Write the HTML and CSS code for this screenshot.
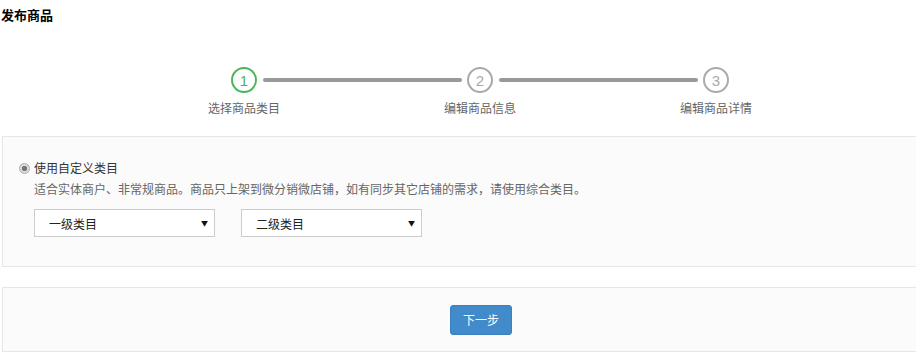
FILE: index.html
```html
<!DOCTYPE html>
<html lang="zh">
<head>
<meta charset="utf-8">
<link rel="stylesheet" href="styles.css">
</head>
<body>
<h1 class="title">发布商品</h1>
<div class="steps">
  <div class="step-track">
    <span class="circle active">1</span>
    <span class="line"></span>
    <span class="circle">2</span>
    <span class="line"></span>
    <span class="circle">3</span>
  </div>
  <div class="step-labels">
    <span class="label">选择商品类目</span>
    <span class="label">编辑商品信息</span>
    <span class="label">编辑商品详情</span>
  </div>
</div>
<div class="panel panel-main">
  <label class="radio-row"><span class="radio"></span>使用自定义类目</label>
  <p class="desc">适合实体商户、非常规商品。商品只上架到微分销微店铺，如有同步其它店铺的需求，请使用综合类目。</p>
  <div class="selects">
    <div class="select"><span>一级类目</span><span class="arrow">▼</span></div>
    <div class="select"><span>二级类目</span><span class="arrow">▼</span></div>
  </div>
</div>
<div class="panel panel-actions">
  <button class="btn">下一步</button>
</div>
</body>
</html>
```
FILE: styles.css
```css
* { box-sizing: border-box; }
html, body { overflow: hidden; }
body {
  margin: 0;
  font-family: "Noto Sans CJK SC", "Liberation Sans", sans-serif;
  font-size: 12px;
  color: #333;
  background: #fff;
}
.title {
  margin: 0;
  padding: 6px 0 0 1px;
  font-size: 13px;
  font-weight: bold;
  color: #000;
  line-height: 18px;
}
.steps {
  padding: 43px 0 0 126px;
}
.step-track {
  display: flex;
  align-items: center;
  padding-left: 105px;
}
.circle {
  width: 26px;
  height: 26px;
  border: 2px solid #aaa;
  border-radius: 50%;
  display: flex;
  align-items: center;
  justify-content: center;
  font-family: "Liberation Sans", sans-serif;
  font-size: 15px;
  color: #aaa;
  flex: none;
}
.circle.active {
  border-color: #4cb55b;
  color: #4cb55b;
}
.line {
  width: 199px;
  height: 4px;
  background: #999;
  margin: 0 5px 0 6px;
  border-radius: 2px;
  flex: none;
}
.step-labels {
  display: flex;
  margin-top: 7px;
}
.label {
  width: 236px;
  text-align: center;
  color: #666;
  line-height: 16px;
}
.panel {
  margin-left: 2px;
  width: 914px;
  border: 1px solid #e6e6e6;
  border-right: none;
  background: #fbfbfb;
}
.panel-main {
  margin-top: 20px;
  height: 131px;
  padding: 23px 0 0 16px;
}
.radio-row {
  display: flex;
  align-items: center;
  color: #333;
  line-height: 16px;
}
.radio {
  width: 11px;
  height: 11px;
  border-radius: 50%;
  border: 1px solid #aaa;
  background: radial-gradient(circle, #777 0 2.5px, #ddd 3px);
  margin-right: 4px;
}
.desc {
  margin: 5px 0 0 15px;
  color: #666;
  line-height: 16px;
}
.selects {
  display: flex;
  gap: 26px;
  margin: 12px 0 0 15px;
}
.select {
  width: 181px;
  height: 28px;
  border: 1px solid #ccc;
  background: #fff;
  display: flex;
  align-items: center;
  justify-content: space-between;
  padding: 0 6px 0 14px;
  color: #222;
}
.arrow {
  font-size: 7px;
  color: #111;
}
.panel-actions {
  margin-top: 20px;
  height: 65px;
  padding-left: 447px;
  display: flex;
  align-items: center;
}
.btn {
  width: 62px;
  height: 30px;
  border: 1px solid #3a7fc0;
  border-radius: 3px;
  background: #428bca;
  color: #fff;
  font-family: "Noto Sans CJK SC", sans-serif;
  font-size: 12px;
  padding: 0;
}
```
